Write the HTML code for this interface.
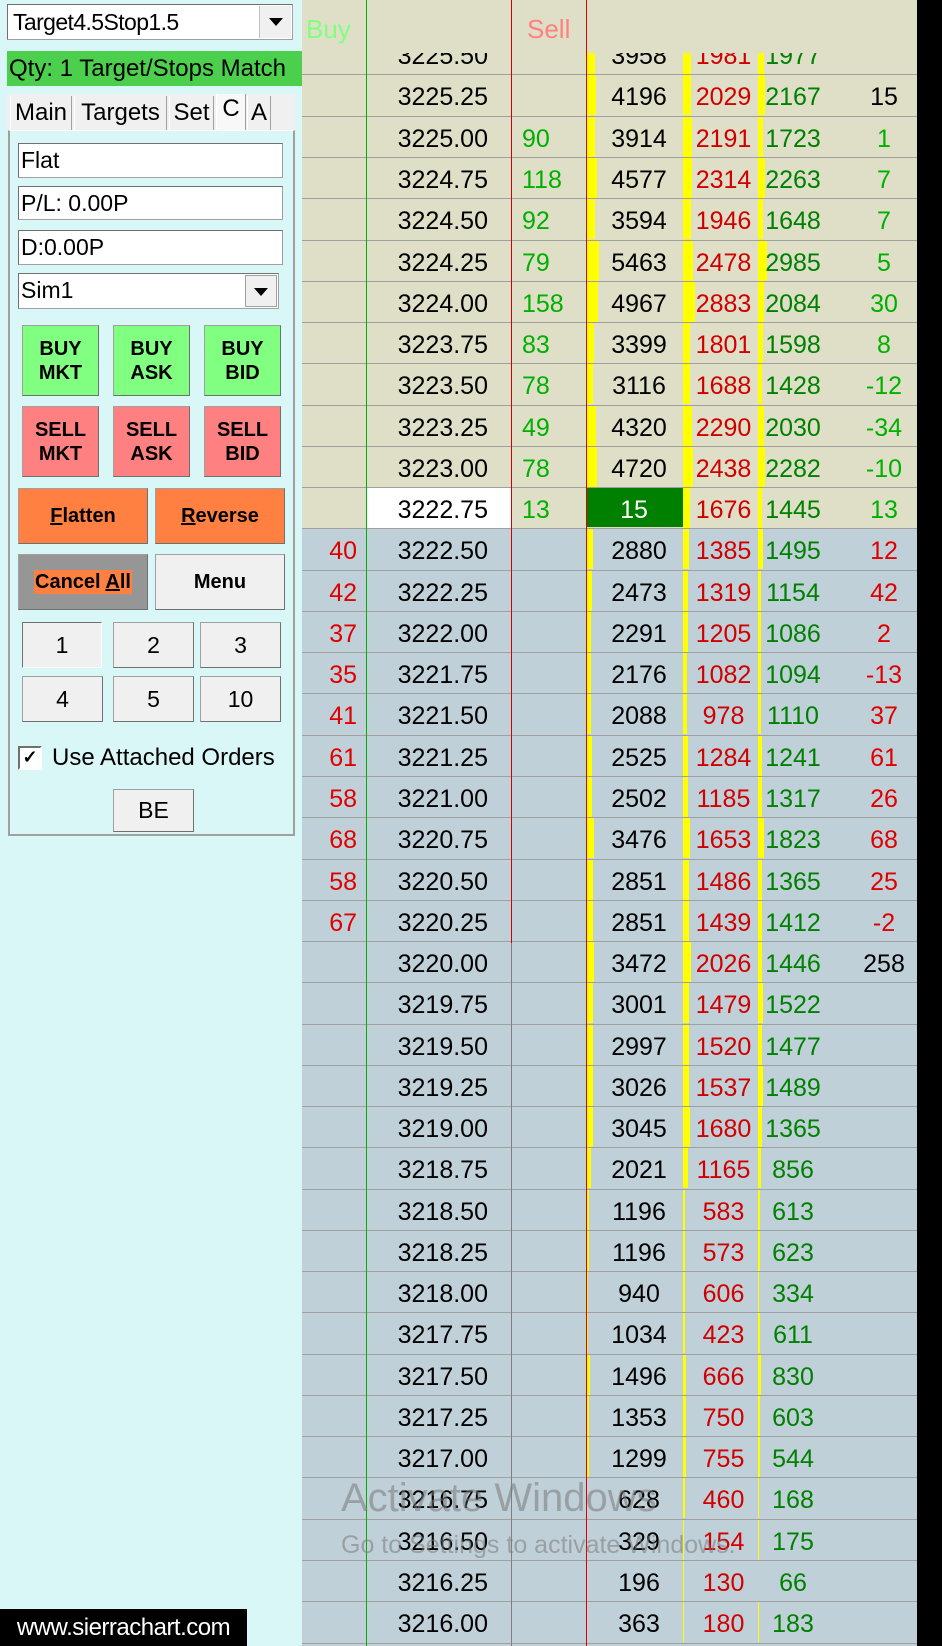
<!DOCTYPE html>
<html><head><meta charset="utf-8"><style>
*{margin:0;padding:0;box-sizing:border-box}
body{width:942px;height:1646px;position:relative;overflow:hidden;background:#daf7f7;font-family:"Liberation Sans",sans-serif}
.abs{position:absolute}
#lad{position:absolute;left:302px;top:0;width:615px;height:1646px;background:#c0d0d8;overflow:hidden}
#rows{position:absolute;left:0;top:34.2px;width:615px}
.r{position:relative;height:41.28px;border-bottom:1px solid #a0a0a0;font-size:25px;line-height:40px;background:#c0d0d8}
.r.u{background:#dfdfc8}
.r span{position:absolute;top:2px;white-space:nowrap}
.c1{left:0;width:55px;text-align:right;color:#e00000}
.pr{left:64px;width:122px;text-align:right;color:#000}
.c3{left:220px;color:#00b000}
.vol{left:293px;width:88px;text-align:center;color:#000}
.rd{left:387px;width:69px;text-align:center;color:#d00000}
.gr{left:462px;width:58px;text-align:center;color:#008000}
.ls{left:548px;width:68px;text-align:center;color:#00b000}
.ls.k{color:#000}.ls.n{color:#e00000}
.r i{position:absolute;top:0;height:40px;background:#ffff00}
.b1{left:284px}.b2{left:381px}.b3{left:456px}
#hdr{position:absolute;left:0;top:0;width:615px;height:53px;background:#dfdfc8;font-size:26px;line-height:58px}
.vl{position:absolute;top:0;width:1px}
.box{position:absolute;background:#fff;border:1px solid #a0a0a0;border-top-color:#707070;border-left-color:#707070;font-size:23px;line-height:32px;padding-left:2px}
.btn{position:absolute;border:1px solid #a0a0a0;border-right-color:#707070;border-bottom-color:#707070;text-align:center;font-weight:bold;font-size:20px;display:flex;align-items:center;justify-content:center;line-height:24px}
.nb{position:absolute;background:#f0f0f0;border:1px solid #a0a0a0;border-right-color:#707070;border-bottom-color:#707070;text-align:center;font-size:23px;line-height:44px}
.tab{position:absolute;top:96px;height:34px;background:#f0f0f0;border-right:1px solid #a0a0a0;border-left:1px solid #fff;font-size:24px;line-height:34px;text-align:center}
</style></head><body>

<div class="box" style="left:7px;top:4px;width:286px;height:36px;font-size:23px;padding-left:5px;line-height:34px;letter-spacing:-0.6px">Target4.5Stop1.5</div>
<div class="abs" style="left:259px;top:6px;width:32px;height:32px;background:#f0f0f0;border-left:1px solid #c0c0c0"><div class="abs" style="left:9px;top:12px;width:0;height:0;border-left:7px solid transparent;border-right:7px solid transparent;border-top:8px solid #000"></div></div>
<div class="abs" style="left:7px;top:51px;width:295px;height:35px;background:#4ccf4c;font-size:24px;line-height:35px;padding-left:2px">Qty: 1 Target/Stops Match</div>
<div class="abs" style="left:7px;top:94px;width:288px;height:36px;background:#f0f0f0"></div>
<div class="tab" style="left:10px;width:62px">Main</div>
<div class="tab" style="left:74px;width:93px">Targets</div>
<div class="tab" style="left:169px;width:45px">Set</div>
<div class="tab" style="left:216px;top:94px;height:37px;width:30px;background:#f8f8f8;line-height:30px">C</div>
<div class="tab" style="left:247px;width:24px">A</div>
<div class="abs" style="left:8px;top:130px;width:287px;height:706px;border:2px solid #a0a0a0;border-top:1px solid #fff;background:#daf7f7"></div>
<div class="box" style="left:18px;top:143px;width:265px;height:35px">Flat</div>
<div class="box" style="left:18px;top:186px;width:265px;height:34px">P/L: 0.00P</div>
<div class="box" style="left:18px;top:230px;width:265px;height:35px">D:0.00P</div>
<div class="box" style="left:18px;top:273px;width:261px;height:36px">Sim1</div>
<div class="abs" style="left:245px;top:275px;width:32px;height:32px;background:#f0f0f0;border:1px solid #a0a0a0"><div class="abs" style="left:8px;top:12px;width:0;height:0;border-left:7px solid transparent;border-right:7px solid transparent;border-top:8px solid #000"></div></div>

<div class="btn" style="left:22px;top:325px;width:77px;height:71px;background:#80ff80">BUY<br>MKT</div>
<div class="btn" style="left:113px;top:325px;width:77px;height:71px;background:#80ff80">BUY<br>ASK</div>
<div class="btn" style="left:204px;top:325px;width:77px;height:71px;background:#80ff80">BUY<br>BID</div>
<div class="btn" style="left:22px;top:406px;width:77px;height:71px;background:#ff8080">SELL<br>MKT</div>
<div class="btn" style="left:113px;top:406px;width:77px;height:71px;background:#ff8080">SELL<br>ASK</div>
<div class="btn" style="left:204px;top:406px;width:77px;height:71px;background:#ff8080">SELL<br>BID</div>
<div class="btn" style="left:18px;top:488px;width:130px;height:56px;background:#ff8040"><span><u>F</u>latten</span></div>
<div class="btn" style="left:155px;top:488px;width:130px;height:56px;background:#ff8040"><span><u>R</u>everse</span></div>
<div class="btn" style="left:18px;top:554px;width:130px;height:56px;background:#969696"><span style="background:#ff8040;padding:0 1px">Cancel <u>A</u>ll</span></div>
<div class="btn" style="left:155px;top:554px;width:130px;height:56px;background:#f0f0f0">Menu</div>
<div class="nb" style="left:22px;top:622px;width:80px;height:46px;border-color:#707070 #fff #fff #707070">1</div>
<div class="nb" style="left:113px;top:622px;width:81px;height:46px">2</div>
<div class="nb" style="left:200px;top:622px;width:81px;height:46px">3</div>
<div class="nb" style="left:22px;top:676px;width:81px;height:46px">4</div>
<div class="nb" style="left:113px;top:676px;width:81px;height:46px">5</div>
<div class="nb" style="left:200px;top:676px;width:81px;height:46px">10</div>
<div class="abs" style="left:18px;top:746px;width:24px;height:24px;background:#fff;border:2px solid #707070;border-right-color:#fff;border-bottom-color:#fff;font-size:18px;line-height:19px;text-align:center;font-weight:bold">✓</div>
<div class="abs" style="left:52px;top:743px;font-size:24px;line-height:30px">Use Attached Orders</div>
<div class="nb" style="left:113px;top:789px;width:81px;height:43px;line-height:40px">BE</div>

<div class="abs" style="left:0;top:1609px;width:247px;height:37px;background:#000;color:#fff;font-size:24px;line-height:37px;text-align:center;letter-spacing:-0.5px">www.sierrachart.com</div>

<div id="lad">
<div id="rows">
<div class="r u"><span class="pr">3225.50</span><i class="b1" style="width:9px"></i><span class="vol">3958</span><i class="b2" style="width:8px"></i><span class="rd">1981</span><i class="b3" style="width:6px"></i><span class="gr">1977</span></div>
<div class="r u"><span class="pr">3225.25</span><i class="b1" style="width:10px"></i><span class="vol">4196</span><i class="b2" style="width:8px"></i><span class="rd">2029</span><i class="b3" style="width:7px"></i><span class="gr">2167</span><span class="ls k">15</span></div>
<div class="r u"><span class="pr">3225.00</span><span class="c3">90</span><i class="b1" style="width:9px"></i><span class="vol">3914</span><i class="b2" style="width:9px"></i><span class="rd">2191</span><i class="b3" style="width:5px"></i><span class="gr">1723</span><span class="ls">1</span></div>
<div class="r u"><span class="pr">3224.75</span><span class="c3">118</span><i class="b1" style="width:11px"></i><span class="vol">4577</span><i class="b2" style="width:9px"></i><span class="rd">2314</span><i class="b3" style="width:7px"></i><span class="gr">2263</span><span class="ls">7</span></div>
<div class="r u"><span class="pr">3224.50</span><span class="c3">92</span><i class="b1" style="width:9px"></i><span class="vol">3594</span><i class="b2" style="width:8px"></i><span class="rd">1946</span><i class="b3" style="width:5px"></i><span class="gr">1648</span><span class="ls">7</span></div>
<div class="r u"><span class="pr">3224.25</span><span class="c3">79</span><i class="b1" style="width:13px"></i><span class="vol">5463</span><i class="b2" style="width:10px"></i><span class="rd">2478</span><i class="b3" style="width:9px"></i><span class="gr">2985</span><span class="ls">5</span></div>
<div class="r u"><span class="pr">3224.00</span><span class="c3">158</span><i class="b1" style="width:12px"></i><span class="vol">4967</span><i class="b2" style="width:12px"></i><span class="rd">2883</span><i class="b3" style="width:6px"></i><span class="gr">2084</span><span class="ls">30</span></div>
<div class="r u"><span class="pr">3223.75</span><span class="c3">83</span><i class="b1" style="width:8px"></i><span class="vol">3399</span><i class="b2" style="width:7px"></i><span class="rd">1801</span><i class="b3" style="width:5px"></i><span class="gr">1598</span><span class="ls">8</span></div>
<div class="r u"><span class="pr">3223.50</span><span class="c3">78</span><i class="b1" style="width:7px"></i><span class="vol">3116</span><i class="b2" style="width:7px"></i><span class="rd">1688</span><i class="b3" style="width:4px"></i><span class="gr">1428</span><span class="ls">-12</span></div>
<div class="r u"><span class="pr">3223.25</span><span class="c3">49</span><i class="b1" style="width:10px"></i><span class="vol">4320</span><i class="b2" style="width:9px"></i><span class="rd">2290</span><i class="b3" style="width:6px"></i><span class="gr">2030</span><span class="ls">-34</span></div>
<div class="r u"><span class="pr">3223.00</span><span class="c3">78</span><i class="b1" style="width:11px"></i><span class="vol">4720</span><i class="b2" style="width:10px"></i><span class="rd">2438</span><i class="b3" style="width:7px"></i><span class="gr">2282</span><span class="ls">-10</span></div>
<div class="r u"><i style="left:64px;width:145px;background:#fff"></i><span class="pr">3222.75</span><span class="c3">13</span><i style="left:284px;width:97px;height:39px;background:#008000"></i><span class="vol" style="color:#fff;left:288px">15</span><i class="b2" style="width:7px"></i><span class="rd">1676</span><i class="b3" style="width:4px"></i><span class="gr">1445</span><span class="ls">13</span></div>
<div class="r"><span class="c1">40</span><span class="pr">3222.50</span><i class="b1" style="width:7px"></i><span class="vol">2880</span><i class="b2" style="width:6px"></i><span class="rd">1385</span><i class="b3" style="width:5px"></i><span class="gr">1495</span><span class="ls n">12</span></div>
<div class="r"><span class="c1">42</span><span class="pr">3222.25</span><i class="b1" style="width:6px"></i><span class="vol">2473</span><i class="b2" style="width:5px"></i><span class="rd">1319</span><i class="b3" style="width:3px"></i><span class="gr">1154</span><span class="ls n">42</span></div>
<div class="r"><span class="c1">37</span><span class="pr">3222.00</span><i class="b1" style="width:5px"></i><span class="vol">2291</span><i class="b2" style="width:5px"></i><span class="rd">1205</span><i class="b3" style="width:3px"></i><span class="gr">1086</span><span class="ls n">2</span></div>
<div class="r"><span class="c1">35</span><span class="pr">3221.75</span><i class="b1" style="width:5px"></i><span class="vol">2176</span><i class="b2" style="width:4px"></i><span class="rd">1082</span><i class="b3" style="width:3px"></i><span class="gr">1094</span><span class="ls n">-13</span></div>
<div class="r"><span class="c1">41</span><span class="pr">3221.50</span><i class="b1" style="width:5px"></i><span class="vol">2088</span><i class="b2" style="width:4px"></i><span class="rd">978</span><i class="b3" style="width:3px"></i><span class="gr">1110</span><span class="ls n">37</span></div>
<div class="r"><span class="c1">61</span><span class="pr">3221.25</span><i class="b1" style="width:6px"></i><span class="vol">2525</span><i class="b2" style="width:5px"></i><span class="rd">1284</span><i class="b3" style="width:4px"></i><span class="gr">1241</span><span class="ls n">61</span></div>
<div class="r"><span class="c1">58</span><span class="pr">3221.00</span><i class="b1" style="width:6px"></i><span class="vol">2502</span><i class="b2" style="width:5px"></i><span class="rd">1185</span><i class="b3" style="width:4px"></i><span class="gr">1317</span><span class="ls n">26</span></div>
<div class="r"><span class="c1">68</span><span class="pr">3220.75</span><i class="b1" style="width:8px"></i><span class="vol">3476</span><i class="b2" style="width:7px"></i><span class="rd">1653</span><i class="b3" style="width:6px"></i><span class="gr">1823</span><span class="ls n">68</span></div>
<div class="r"><span class="c1">58</span><span class="pr">3220.50</span><i class="b1" style="width:7px"></i><span class="vol">2851</span><i class="b2" style="width:6px"></i><span class="rd">1486</span><i class="b3" style="width:4px"></i><span class="gr">1365</span><span class="ls n">25</span></div>
<div class="r"><span class="c1">67</span><span class="pr">3220.25</span><i class="b1" style="width:7px"></i><span class="vol">2851</span><i class="b2" style="width:6px"></i><span class="rd">1439</span><i class="b3" style="width:4px"></i><span class="gr">1412</span><span class="ls n">-2</span></div>
<div class="r"><span class="pr">3220.00</span><i class="b1" style="width:8px"></i><span class="vol">3472</span><i class="b2" style="width:8px"></i><span class="rd">2026</span><i class="b3" style="width:4px"></i><span class="gr">1446</span><span class="ls k">258</span></div>
<div class="r"><span class="pr">3219.75</span><i class="b1" style="width:7px"></i><span class="vol">3001</span><i class="b2" style="width:6px"></i><span class="rd">1479</span><i class="b3" style="width:5px"></i><span class="gr">1522</span></div>
<div class="r"><span class="pr">3219.50</span><i class="b1" style="width:7px"></i><span class="vol">2997</span><i class="b2" style="width:6px"></i><span class="rd">1520</span><i class="b3" style="width:4px"></i><span class="gr">1477</span></div>
<div class="r"><span class="pr">3219.25</span><i class="b1" style="width:7px"></i><span class="vol">3026</span><i class="b2" style="width:6px"></i><span class="rd">1537</span><i class="b3" style="width:5px"></i><span class="gr">1489</span></div>
<div class="r"><span class="pr">3219.00</span><i class="b1" style="width:7px"></i><span class="vol">3045</span><i class="b2" style="width:7px"></i><span class="rd">1680</span><i class="b3" style="width:4px"></i><span class="gr">1365</span></div>
<div class="r"><span class="pr">3218.75</span><i class="b1" style="width:5px"></i><span class="vol">2021</span><i class="b2" style="width:5px"></i><span class="rd">1165</span><i class="b3" style="width:3px"></i><span class="gr">856</span></div>
<div class="r"><span class="pr">3218.50</span><i class="b1" style="width:3px"></i><span class="vol">1196</span><i class="b2" style="width:2px"></i><span class="rd">583</span><i class="b3" style="width:2px"></i><span class="gr">613</span></div>
<div class="r"><span class="pr">3218.25</span><i class="b1" style="width:3px"></i><span class="vol">1196</span><i class="b2" style="width:2px"></i><span class="rd">573</span><i class="b3" style="width:2px"></i><span class="gr">623</span></div>
<div class="r"><span class="pr">3218.00</span><i class="b1" style="width:2px"></i><span class="vol">940</span><i class="b2" style="width:2px"></i><span class="rd">606</span><i class="b3" style="width:1px"></i><span class="gr">334</span></div>
<div class="r"><span class="pr">3217.75</span><i class="b1" style="width:2px"></i><span class="vol">1034</span><i class="b2" style="width:2px"></i><span class="rd">423</span><i class="b3" style="width:2px"></i><span class="gr">611</span></div>
<div class="r"><span class="pr">3217.50</span><i class="b1" style="width:4px"></i><span class="vol">1496</span><i class="b2" style="width:3px"></i><span class="rd">666</span><i class="b3" style="width:3px"></i><span class="gr">830</span></div>
<div class="r"><span class="pr">3217.25</span><i class="b1" style="width:3px"></i><span class="vol">1353</span><i class="b2" style="width:3px"></i><span class="rd">750</span><i class="b3" style="width:2px"></i><span class="gr">603</span></div>
<div class="r"><span class="pr">3217.00</span><i class="b1" style="width:3px"></i><span class="vol">1299</span><i class="b2" style="width:3px"></i><span class="rd">755</span><i class="b3" style="width:2px"></i><span class="gr">544</span></div>
<div class="r"><span class="pr">3216.75</span><i class="b1" style="width:1px"></i><span class="vol">628</span><i class="b2" style="width:2px"></i><span class="rd">460</span><i class="b3" style="width:1px"></i><span class="gr">168</span></div>
<div class="r"><span class="pr">3216.50</span><i class="b1" style="width:1px"></i><span class="vol">329</span><i class="b2" style="width:1px"></i><span class="rd">154</span><i class="b3" style="width:1px"></i><span class="gr">175</span></div>
<div class="r"><span class="pr">3216.25</span><span class="vol">196</span><i class="b2" style="width:1px"></i><span class="rd">130</span><span class="gr">66</span></div>
<div class="r"><span class="pr">3216.00</span><i class="b1" style="width:1px"></i><span class="vol">363</span><i class="b2" style="width:1px"></i><span class="rd">180</span><i class="b3" style="width:1px"></i><span class="gr">183</span></div>
</div>
<div id="hdr"><span class="abs" style="left:4px;color:#80ff80">Buy</span><span class="abs" style="left:225px;color:#ff8080">Sell</span></div>
<div class="vl" style="left:64px;height:1646px;background:#00b000"></div>
<div class="vl" style="left:209px;height:943px;background:#d00000"></div>
<div class="vl" style="left:209px;top:943px;height:703px;background:#808080"></div>
<div class="vl" style="left:284px;height:1646px;background:#e00000"></div>
<div class="abs" style="left:39px;top:1476px;font-size:40px;color:rgba(120,120,120,0.55);white-space:nowrap">Activate Windows</div>
<div class="abs" style="left:39px;top:1531px;font-size:25px;color:rgba(120,120,120,0.55);white-space:nowrap">Go to Settings to activate Windows.</div>
</div>
<div class="abs" style="left:917px;top:0;width:25px;height:1646px;background:#000"></div>
</body></html>
